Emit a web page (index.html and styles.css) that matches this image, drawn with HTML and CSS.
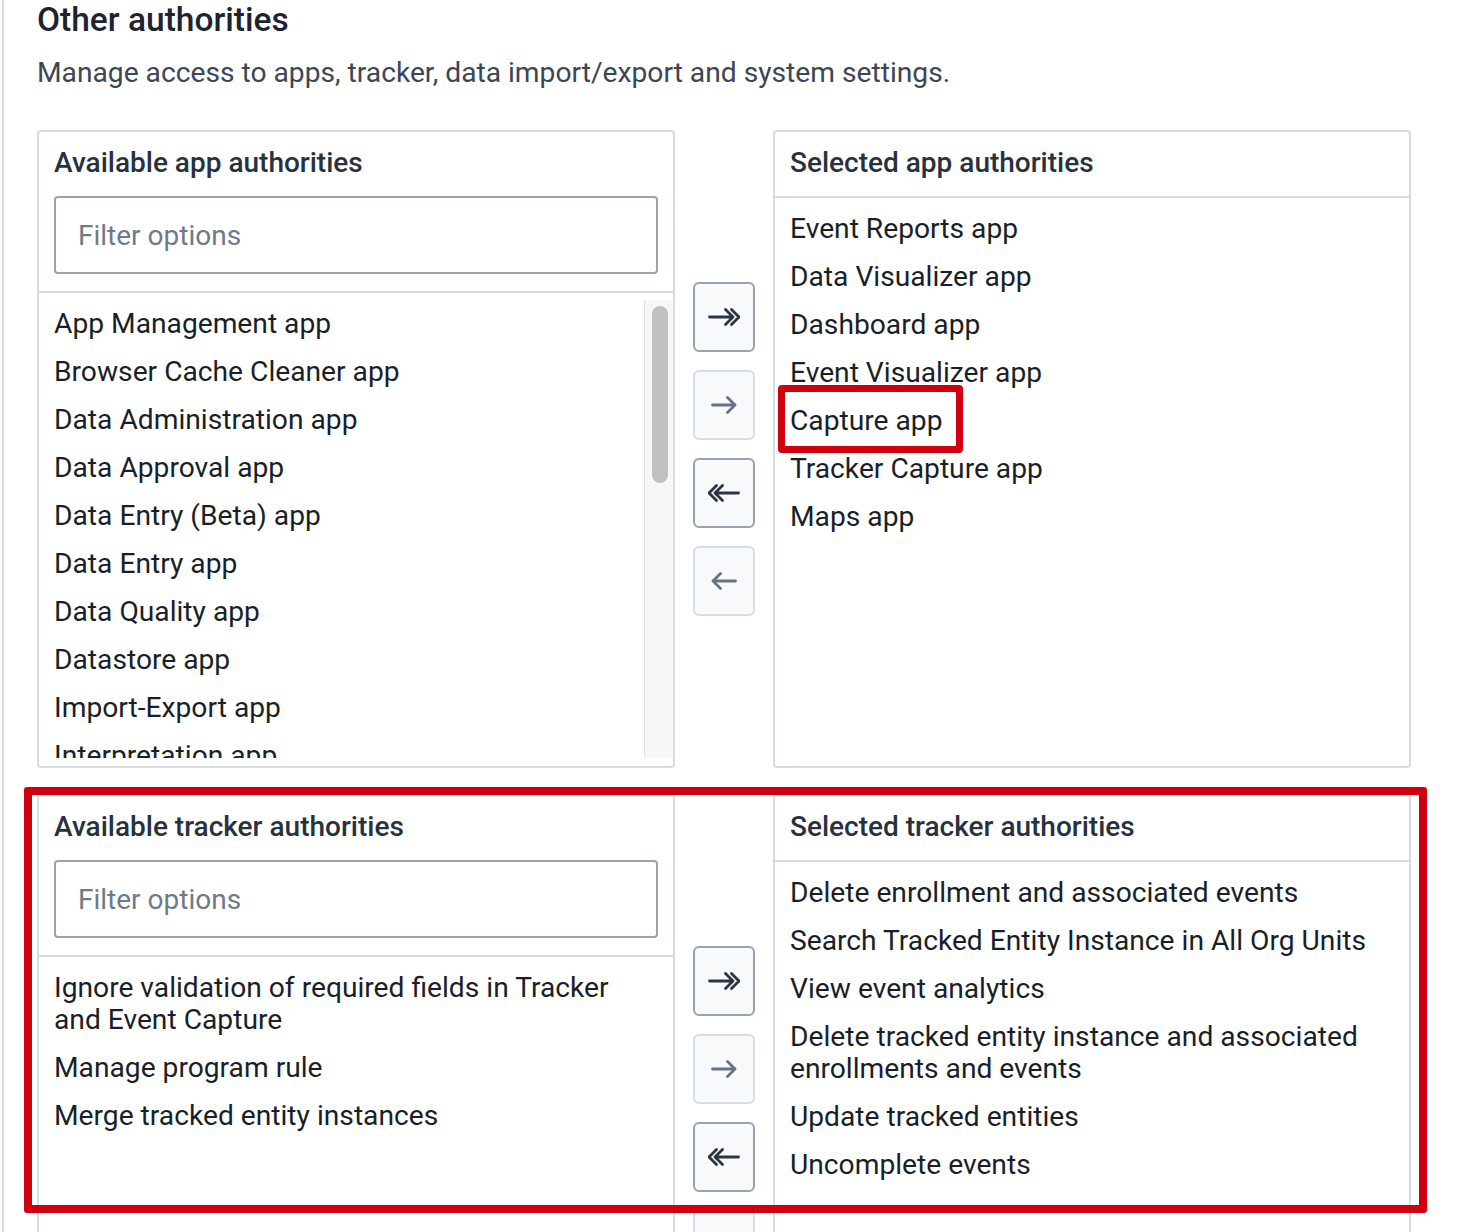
FILE: index.html
```html
<!DOCTYPE html>
<html lang="en">
<head>
<meta charset="utf-8">
<title>Other authorities</title>
<link rel="stylesheet" href="styles.css">
</head>
<body>
<div class="page">
  <h1 class="title">Other authorities</h1>
  <p class="subtitle">Manage access to apps, tracker, data import/export and system settings.</p>

  <section class="transfer">
    <div class="panel">
      <div class="panel-head">
        <div class="panel-title">Available app authorities</div>
        <input class="filter" type="text" placeholder="Filter options">
      </div>
      <div class="panel-list">
        <ul class="options">
          <li class="option">App Management app</li>
          <li class="option">Browser Cache Cleaner app</li>
          <li class="option">Data Administration app</li>
          <li class="option">Data Approval app</li>
          <li class="option">Data Entry (Beta) app</li>
          <li class="option">Data Entry app</li>
          <li class="option">Data Quality app</li>
          <li class="option">Datastore app</li>
          <li class="option">Import-Export app</li>
          <li class="option">Interpretation app</li>
          <li class="option">Maintenance app</li>
          <li class="option">Menu Management app</li>
        </ul>
        <div class="track"><div class="thumb"></div></div>
      </div>
    </div>

    <div class="actions">
      <button class="btn" type="button" aria-label="Select all">
        <svg class="ico-double" viewBox="0 0 32 18" width="32" height="18"><path d="M1.5 9H25M17.5 1.5L25 9L17.5 16.5M23.5 1.5L31 9L23.5 16.5"/></svg>
      </button>
      <button class="btn disabled" type="button" aria-label="Select">
        <svg class="ico-single" viewBox="0 0 26 18" width="26" height="18"><path d="M1.5 9H24M16.5 1.5L24 9L16.5 16.5"/></svg>
      </button>
      <button class="btn" type="button" aria-label="Deselect all">
        <svg class="ico-double flip" viewBox="0 0 32 18" width="32" height="18"><path d="M1.5 9H25M17.5 1.5L25 9L17.5 16.5M23.5 1.5L31 9L23.5 16.5"/></svg>
      </button>
      <button class="btn disabled" type="button" aria-label="Deselect">
        <svg class="ico-single flip" viewBox="0 0 26 18" width="26" height="18"><path d="M1.5 9H24M16.5 1.5L24 9L16.5 16.5"/></svg>
      </button>
    </div>

    <div class="panel">
      <div class="panel-head">
        <div class="panel-title">Selected app authorities</div>
      </div>
      <div class="panel-list">
        <ul class="options">
          <li class="option">Event Reports app</li>
          <li class="option">Data Visualizer app</li>
          <li class="option">Dashboard app</li>
          <li class="option">Event Visualizer app</li>
          <li class="option marked">Capture app<span class="mark"></span></li>
          <li class="option">Tracker Capture app</li>
          <li class="option">Maps app</li>
        </ul>
      </div>
    </div>
  </section>

  <section class="transfer tracker">
    <div class="panel">
      <div class="panel-head">
        <div class="panel-title">Available tracker authorities</div>
        <input class="filter" type="text" placeholder="Filter options">
      </div>
      <div class="panel-list">
        <ul class="options">
          <li class="option">Ignore validation of required fields in Tracker and Event Capture</li>
          <li class="option">Manage program rule</li>
          <li class="option">Merge tracked entity instances</li>
        </ul>
      </div>
    </div>

    <div class="actions">
      <button class="btn" type="button" aria-label="Select all">
        <svg class="ico-double" viewBox="0 0 32 18" width="32" height="18"><path d="M1.5 9H25M17.5 1.5L25 9L17.5 16.5M23.5 1.5L31 9L23.5 16.5"/></svg>
      </button>
      <button class="btn disabled" type="button" aria-label="Select">
        <svg class="ico-single" viewBox="0 0 26 18" width="26" height="18"><path d="M1.5 9H24M16.5 1.5L24 9L16.5 16.5"/></svg>
      </button>
      <button class="btn" type="button" aria-label="Deselect all">
        <svg class="ico-double flip" viewBox="0 0 32 18" width="32" height="18"><path d="M1.5 9H25M17.5 1.5L25 9L17.5 16.5M23.5 1.5L31 9L23.5 16.5"/></svg>
      </button>
      <button class="btn disabled" type="button" aria-label="Deselect">
        <svg class="ico-single flip" viewBox="0 0 26 18" width="26" height="18"><path d="M1.5 9H24M16.5 1.5L24 9L16.5 16.5"/></svg>
      </button>
    </div>

    <div class="panel">
      <div class="panel-head">
        <div class="panel-title">Selected tracker authorities</div>
      </div>
      <div class="panel-list">
        <ul class="options">
          <li class="option">Delete enrollment and associated events</li>
          <li class="option">Search Tracked Entity Instance in All Org Units</li>
          <li class="option">View event analytics</li>
          <li class="option">Delete tracked entity instance and associated enrollments and events</li>
          <li class="option">Update tracked entities</li>
          <li class="option">Uncomplete events</li>
        </ul>
      </div>
    </div>

    <div class="frame"></div>
  </section>
</div>
</body>
</html>
```

FILE: styles.css
```css
* {
  box-sizing: border-box;
}

html,
body {
  margin: 0;
  padding: 0;
}

body {
  background: #ffffff;
  font-family: Roboto, "Noto Sans", "Liberation Sans", sans-serif;
  color: #212934;
  height: 1232px;
  overflow: hidden;
}

.page {
  margin-left: 2px;
  border-left: 2px solid #d5dde5;
  padding-left: 33px;
  min-height: 1232px;
}

.title {
  margin: 0;
  font-size: 33.5px;
  line-height: 40px;
  font-weight: 500;
  color: #1d2430;
}

.subtitle {
  margin: 13px 0 0;
  font-size: 28.2px;
  line-height: 40px;
  font-weight: 400;
  color: #3b4656;
}

.transfer {
  display: grid;
  grid-template-columns: 638px 98px 638px;
  height: 638px;
  margin-top: 37px;
}

.transfer.tracker {
  margin-top: 26px;
  position: relative;
}

.panel {
  border: 2px solid #d5dde5;
  border-radius: 4px;
  display: flex;
  flex-direction: column;
  min-height: 0;
  overflow: hidden;
  background: #ffffff;
}

.panel-head {
  padding: 15px 15px 17px;
  border-bottom: 2px solid #d5dde5;
}

.panel-title {
  font-size: 28px;
  line-height: 32px;
  font-weight: 500;
  color: #273140;
}

.filter {
  display: block;
  margin-top: 17px;
  width: 100%;
  height: 78px;
  border: 2px solid #97a3b1;
  border-radius: 4px;
  padding: 0 22px;
  font-family: Roboto, "Noto Sans", sans-serif;
  font-size: 28px;
  color: #212934;
  background: #ffffff;
  outline: none;
}

.filter::placeholder {
  color: #6e7a8a;
  opacity: 1;
}

.panel-list {
  flex: 1;
  min-height: 0;
  padding: 7px 0 8px;
  display: flex;
}

.options {
  list-style: none;
  margin: 0;
  padding: 0;
  flex: 1;
  min-width: 0;
  overflow: hidden;
}

.option {
  padding: 8px 15px;
  font-size: 28.2px;
  line-height: 32px;
  color: #191f28;
}

.option.marked {
  position: relative;
}

.mark {
  position: absolute;
  top: -12px;
  left: 3px;
  width: 185px;
  height: 68px;
  border: 7px solid #d0000f;
  border-radius: 4px;
}

.track {
  width: 29px;
  border-left: 1px solid #e4e4e4;
  background: #f7f7f7;
  padding: 6px 5px 0 7px;
}

.thumb {
  width: 16px;
  height: 177px;
  border-radius: 8px;
  background: #c1c1c1;
}

.actions {
  display: flex;
  flex-direction: column;
  align-items: center;
  justify-content: center;
  gap: 18px;
}

.btn {
  width: 62px;
  height: 70px;
  border: 2px solid #97a3b1;
  border-radius: 6px;
  background: #f8f9fa;
  display: flex;
  align-items: center;
  justify-content: center;
  padding: 0;
  color: #2b3442;
}

.btn.disabled {
  border-color: #d5dde5;
  color: #687385;
}

.btn svg {
  display: block;
  fill: none;
  stroke: currentColor;
  stroke-width: 2.8;
  stroke-linecap: round;
  stroke-linejoin: round;
}

.flip {
  transform: scaleX(-1);
}

.frame {
  position: absolute;
  top: -7px;
  left: -13px;
  width: 1403px;
  height: 426px;
  border: 8px solid #d0000f;
  border-radius: 3px;
  pointer-events: none;
}
```
